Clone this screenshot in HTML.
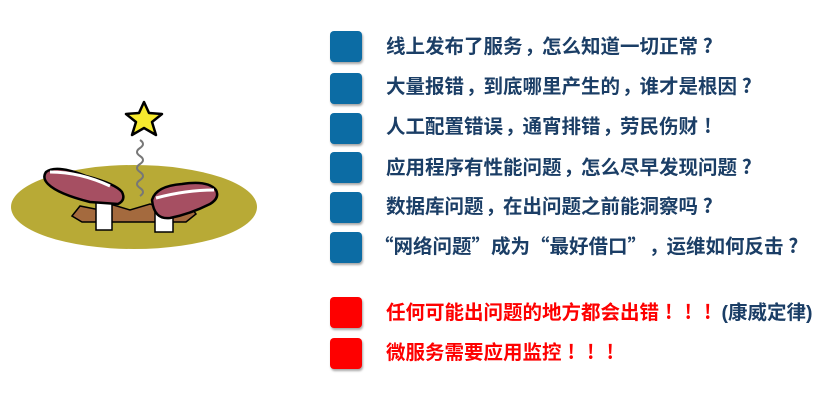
<!DOCTYPE html>
<html><head><meta charset="utf-8"><style>
html,body{margin:0;padding:0;background:#fff;width:836px;height:407px;overflow:hidden;position:relative}
.sq{position:absolute;left:330px;width:32px;height:31px;border-radius:4px;background:#0c6ca4;box-shadow:1px 2px 2px rgba(0,0,0,.35)}
.sq.r{background:#fe0000}
.t{position:absolute;font-family:"Noto Sans CJK SC",sans-serif;font-weight:bold;font-size:19.5px;color:#1b3e66;white-space:nowrap;line-height:22px}
.t.r{color:#fe0000}
.p{display:inline-block;width:1em;text-align:center}
.c{display:inline-block;width:1em;text-align:left;padding-left:2px;box-sizing:border-box}
</style></head><body>
<svg width="270" height="260" style="position:absolute;left:0;top:0" viewBox="0 0 270 260">
<ellipse cx="134" cy="207" rx="123" ry="42" fill="#b8aa36"/>
<path d="M140 140 q6 4 0 8 q-6 4 0 8 q6 4 0 8 q-6 4 0 8 q6 4 0 8 q-6 4 0 8 q6 4 0 8" stroke="#777" stroke-width="2" fill="none"/>
<polygon points="144,102 149,113 162,114 152,122 156,135 144,128 132,135 136,122 126,114 139,113" fill="#f7ea2e" stroke="#000" stroke-width="2.5" stroke-linejoin="round"/>
<path d="M72 216 l8 -10 l20 4 l10 -6 l20 6 l20 -6 l20 6 l20 -4 l6 8 l-10 8 h-104z" fill="#a46a3e" stroke="#000" stroke-width="1.5"/>
<rect x="96" y="196" width="16" height="34" fill="#fff" stroke="#000" stroke-width="1.5"/>
<rect x="155" y="208" width="18" height="24" fill="#fff" stroke="#000" stroke-width="1.5"/>
<path d="M46 172 q10 -8 40 4 q30 8 36 16 q4 8 -4 12 l-28 -2 q-32 -8 -42 -18 q-6 -6 -2 -12z" fill="#a64f62" stroke="#000" stroke-width="2.5"/>
<path d="M50 172 q30 0 60 14" stroke="#fff" stroke-width="3" fill="none"/>
<path d="M152 200 q4 -14 30 -16 q26 -4 34 6 q4 8 -6 14 q-20 10 -40 14 q-16 2 -18 -18z" fill="#a64f62" stroke="#000" stroke-width="2.5"/>
<path d="M156 198 q30 -8 58 -8" stroke="#fff" stroke-width="3" fill="none"/>
</svg>
<div class="sq" style="top:31px"></div><div class="t" style="left:386px;top:34px">线上发布了服务<span class="c">，</span>怎么知道一切正常<span class="p">?</span></div>
<div class="sq" style="top:73px"></div><div class="t" style="left:386px;top:74px">大量报错<span class="c">，</span>到底哪里产生的<span class="c">，</span>谁才是根因<span class="p">?</span></div>
<div class="sq" style="top:113px"></div><div class="t" style="left:386px;top:114px">人工配置错误<span class="c">，</span>通宵排错<span class="c">，</span>劳民伤财<span class="p">!</span></div>
<div class="sq" style="top:152px"></div><div class="t" style="left:386px;top:155px">应用程序有性能问题<span class="c">，</span>怎么尽早发现问题<span class="p">?</span></div>
<div class="sq" style="top:192px"></div><div class="t" style="left:386px;top:194px">数据库问题<span class="c">，</span>在出问题之前能洞察吗<span class="p">?</span></div>
<div class="sq" style="top:232px"></div><div class="t" style="left:374px;top:234px">“网络问题”成为“最好借口”<span class="c">，</span>运维如何反击<span class="p">?</span></div>
<div class="sq r" style="top:297px"></div><div class="t r" style="left:386px;top:300px">任何可能出问题的地方都会出错<span class="p">!</span><span class="p">!</span><span class="p">!</span><span style="color:#1b3e66;margin-left:4px;font-family:'Liberation Sans','Noto Sans CJK SC',sans-serif">(康威定律)</span></div>
<div class="sq r" style="top:338px"></div><div class="t r" style="left:386px;top:340px">微服务需要应用监控<span class="p">!</span><span class="p">!</span><span class="p">!</span></div>
</body></html>
